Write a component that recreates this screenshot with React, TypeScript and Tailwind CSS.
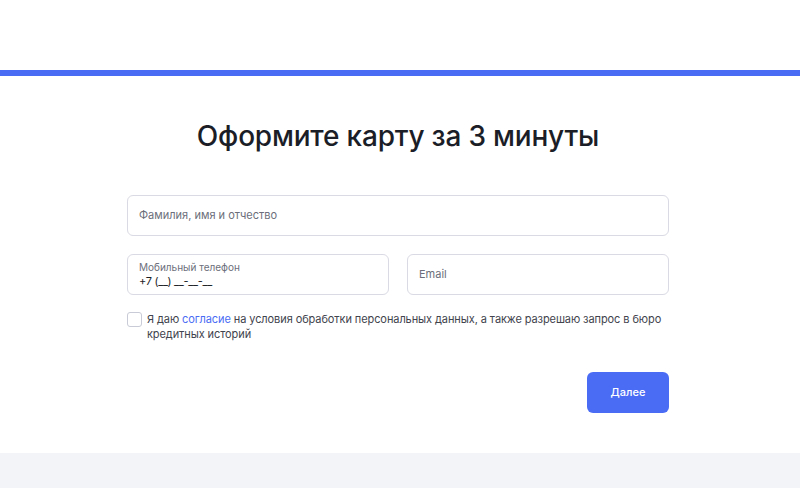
export default function App() {
  return (
    <div
      className="min-h-screen bg-white flex flex-col"
      style={{ fontFamily: 'Inter, "Noto Sans", Arial, sans-serif' }}
    >
      {/* top white header area */}
      <div className="h-[70px] bg-white" />
      <div className="h-[6px] bg-[#4a6cf5]" />

      <section className="h-[377px] bg-white flex justify-center pr-1">
        <div className="w-[542px] flex flex-col">
          <h1 className="mt-[43px] text-center text-[28px] leading-[34px] font-medium text-[#1b1d27] tracking-[-0.2px]">
            Оформите карту за 3 минуты
          </h1>

          <div className="mt-[42px] h-[41px] rounded-[6px] border border-[#d9dae4] flex items-center px-[11px]">
            <span className="text-[11px] text-[#6c6f7b]">Фамилия, имя и отчество</span>
          </div>

          <div className="mt-[18px] flex gap-[18px]">
            <div className="flex-1 h-[41px] rounded-[6px] border border-[#d9dae4] flex flex-col justify-center px-[11px]">
              <span className="text-[10px] leading-[13px] text-[#6c6f7b]">Мобильный телефон</span>
              <span className="text-[11px] leading-[14px] text-[#1c1e26] tracking-[-0.3px]">+7 (__) __-__-__</span>
            </div>
            <div className="flex-1 h-[41px] rounded-[6px] border border-[#d9dae4] flex items-center px-[11px]">
              <span className="text-[11px] text-[#6c6f7b]">Email</span>
            </div>
          </div>

          <div className="mt-[17px] flex items-start gap-[5px]">
            <div className="w-[15px] h-[15px] shrink-0 rounded-[3px] border border-[#c9cbd6] bg-white" />
            <p className="text-[11px] leading-[15px] text-[#41434d] tracking-[-0.09px]">
              Я даю <span className="text-[#4a6cf5]">согласие</span> на условия обработки персональных данных, а также разрешаю запрос в бюро кредитных историй
            </p>
          </div>

          <div className="mt-[30px] flex justify-end">
            <button className="w-[82px] h-[41px] rounded-[6px] bg-[#4a6cf5] text-white text-[11px] font-medium">
              Далее
            </button>
          </div>
        </div>
      </section>

      <div className="flex-1 bg-[#f3f4f8]" />
    </div>
  );
}
